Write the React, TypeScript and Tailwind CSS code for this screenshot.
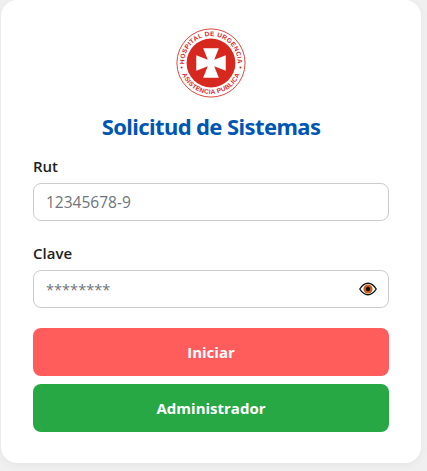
const font = "font-['Open_Sans','Noto_Sans',sans-serif]";

function Logo() {
  return (
    <svg width="70" height="70" viewBox="0 0 76 76" className="block">
      <defs>
        <path id="arcTop" d="M 10.2 46 A 29 29 0 1 1 65.8 46" />
        <path id="arcBottom" d="M 5.5 30 A 33.5 33.5 0 1 0 70.5 30" />
      </defs>
      <circle cx="38" cy="38" r="37" fill="#fff" stroke="#d9382c" strokeWidth="1" />
      <circle cx="38" cy="38" r="26.5" fill="#d6281f" />
      <path
        d="M29.5 22 L46.5 22 L41.5 34.5 L54 29.5 L54 46.5 L41.5 41.5 L46.5 54 L29.5 54 L34.5 41.5 L22 46.5 L22 29.5 L34.5 34.5 Z"
        fill="#fff"
      />
      <text fontSize="7" fontWeight="700" fill="#d6281f" fontFamily="Liberation Sans, sans-serif" letterSpacing="0.4">
        <textPath href="#arcTop" startOffset="50%" textAnchor="middle">
          HOSPITAL DE URGENCIA
        </textPath>
      </text>
      <text fontSize="7" fontWeight="700" fill="#d6281f" fontFamily="Liberation Sans, sans-serif" letterSpacing="0.3">
        <textPath href="#arcBottom" startOffset="50%" textAnchor="middle">
          ASISTENCIA PUBLICA
        </textPath>
      </text>
      <circle cx="6" cy="43" r="1.1" fill="#d6281f" />
      <circle cx="70" cy="43" r="1.1" fill="#d6281f" />
    </svg>
  );
}

function EyeIcon() {
  return (
    <svg width="18" height="14" viewBox="0 0 18 14" className="block">
      <path d="M0.8 7 C3.5 2.6 6 1.2 9 1.2 C12 1.2 14.5 2.6 17.2 7 C14.5 11.4 12 12.8 9 12.8 C6 12.8 3.5 11.4 0.8 7 Z" fill="#fff" stroke="#111" strokeWidth="1.4" />
      <circle cx="9" cy="7" r="4.6" fill="#c8601c" />
      <circle cx="9" cy="7" r="2.2" fill="#111" />
    </svg>
  );
}

export default function App() {
  return (
    <div className={`${font} h-[471px] w-[427px] overflow-hidden bg-[#f0f0f0] text-[#222]`}>
      <div className="ml-px flex h-[463px] w-[420px] flex-col rounded-2xl bg-white px-8 pt-[28px] shadow-[0_2px_8px_rgba(0,0,0,0.05)]">
        <div className="flex justify-center">
          <Logo />
        </div>
        <h1 className="mt-[10px] text-center font-['Noto_Sans',sans-serif] text-[22px] leading-[36px] font-bold tracking-[-0.6px] text-[#0056b3]">
          Solicitud de Sistemas
        </h1>

        <label className="mt-[10px] block text-[15px] leading-[24px] font-semibold">Rut</label>
        <input
          placeholder="12345678-9"
          className="mt-[5px] h-[38px] w-full rounded-lg border border-[#ccc] px-3 text-[15.5px] placeholder:text-[#6c757d] focus:outline-none"
        />

        <label className="mt-5 block text-[15px] leading-[24px] font-semibold">Clave</label>
        <div className="relative mt-[5px]">
          <input
            placeholder="********"
            className="h-[38px] w-full rounded-lg border border-[#ccc] px-3 text-[14.6px] placeholder:text-[#6c757d] focus:outline-none"
          />
          <span className="absolute top-[12px] right-[12px]">
            <EyeIcon />
          </span>
        </div>

        <button className="mt-5 h-12 w-full rounded-lg bg-[#ff5c5c] text-[15px] font-bold text-white">
          Iniciar
        </button>
        <button className="mt-2 h-12 w-full rounded-lg bg-[#28a745] text-[15px] font-bold text-white">
          Administrador
        </button>
      </div>
    </div>
  );
}
